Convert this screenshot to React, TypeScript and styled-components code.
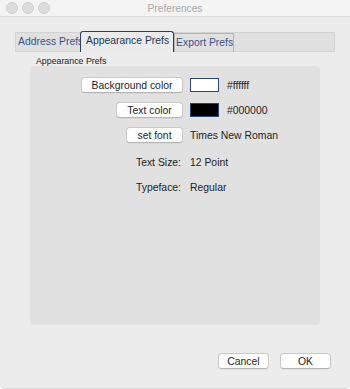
import React from 'react';
import styled, { createGlobalStyle } from 'styled-components';

const GlobalStyle = createGlobalStyle`
  html, body {
    margin: 0;
    padding: 0;
    background: #ffffff;
  }
  body {
    font-family: 'Liberation Sans', Arial, sans-serif;
    -webkit-font-smoothing: antialiased;
  }
`;

const Window = styled.div`
  width: 350px;
  height: 389px;
  box-sizing: border-box;
  display: flex;
  flex-direction: column;
  background: #ececec;
  border-radius: 0 0 5px 5px;
  border-bottom: 1px solid #d6d6d6;
  overflow: hidden;
`;

const TitleBar = styled.div`
  height: 16px;
  flex: none;
  display: grid;
  grid-template-columns: 1fr auto 1fr;
  align-items: center;
  padding: 0 6px;
  background: #f4f4f4;
  border-bottom: 1px solid #d9d9d9;
`;

const Lights = styled.div`
  display: flex;
  gap: 4px;
`;

const Light = styled.span`
  width: 10px;
  height: 10px;
  border-radius: 50%;
  background: #dcdcdc;
  border: 0.5px solid #d0d0d0;
`;

const Title = styled.div`
  font-size: 10.2px;
  color: #a8a8a8;
`;

const TabStrip = styled.div`
  margin: 15px 15px 0;
  height: 20px;
  display: flex;
  align-items: stretch;
  background: #e0e0e0;
  border: 1px solid #d3d3d3;
  box-sizing: border-box;
`;

const Tab = styled.div<{ $active?: boolean; $width: number }>`
  width: ${p => p.$width}px;
  flex: none;
  box-sizing: border-box;
  overflow: hidden;
  white-space: nowrap;
  font-size: 10.4px;
  line-height: 18px;
  padding-left: ${p => (p.$active ? 5 : 2)}px;
  color: ${p => (p.$active ? '#1f3457' : '#3a5384')};
  background: ${p => (p.$active ? '#ebebeb' : 'transparent')};
  border: ${p => (p.$active ? '1.5px solid #25406b' : 'none')};
  border-bottom: none;
  border-radius: ${p => (p.$active ? '3px 3px 0 0' : '0')};
  margin-top: ${p => (p.$active ? '-2px' : '0')};
  margin-bottom: -1px;
`;

const OutlinedTab = styled(Tab)`
  border: 1px solid #b4b4b4;
  border-bottom: none;
  margin-top: 0;
  padding-left: 1px;
`;

const GroupLabel = styled.div`
  margin: 4px 0 0 36px;
  font-size: 8.8px;
  line-height: 10px;
  color: #1a1a1a;
`;

const Panel = styled.div`
  margin: 0 30px;
  height: 259px;
  box-sizing: border-box;
  background: #e1e1e1;
  border-radius: 4px;
  padding-top: 11px;
  display: grid;
  grid-template-columns: 153px 1fr;
  grid-auto-rows: 25px;
  column-gap: 7px;
  align-content: start;
`;

const Cell = styled.div<{ $right?: boolean }>`
  display: flex;
  align-items: center;
  justify-content: ${p => (p.$right ? 'flex-end' : 'flex-start')};
  gap: 8px;
  font-size: 10.4px;
  color: #1e1e1e;
  height: 16px;
`;

const LabelCell = styled(Cell)`
  height: 20px;
  padding-right: 2px;
`;

const PushButton = styled.button<{ $width: number }>`
  width: ${p => p.$width}px;
  height: 16px;
  padding: 0;
  box-sizing: border-box;
  font-family: inherit;
  font-size: 10.4px;
  color: #1e1e1e;
  background: #ffffff;
  border: 1px solid #c9c9c9;
  border-bottom-color: #b5b5b5;
  border-radius: 4px;
  box-shadow: 0 0.5px 0.5px rgba(0, 0, 0, 0.08);
`;

const Swatch = styled.span<{ $color: string }>`
  width: 29px;
  height: 14px;
  box-sizing: border-box;
  background: ${p => p.$color};
  border: 1.5px solid #2a4677;
`;

const Footer = styled.div`
  margin-top: auto;
  display: flex;
  justify-content: flex-end;
  gap: 11px;
  padding: 0 19px 19px 0;
`;

const rows = [
  { button: 'Background color', width: 102, swatch: '#ffffff', value: '#ffffff' },
  { button: 'Text color', width: 67, swatch: '#000000', value: '#000000' },
  { button: 'set font', width: 57, value: 'Times New Roman' },
];

export default function App() {
  return (
    <>
      <GlobalStyle />
      <Window>
        <TitleBar>
          <Lights>
            <Light />
            <Light />
            <Light />
          </Lights>
          <Title>Preferences</Title>
          <span />
        </TitleBar>

        <TabStrip>
          <Tab $width={64}>Address Prefs</Tab>
          <Tab $active $width={94}>Appearance Prefs</Tab>
          <OutlinedTab $width={60}>Export Prefs</OutlinedTab>
        </TabStrip>

        <GroupLabel>Appearance Prefs</GroupLabel>

        <Panel>
          {rows.map(r => (
            <React.Fragment key={r.button}>
              <Cell $right>
                <PushButton $width={r.width}>{r.button}</PushButton>
              </Cell>
              <Cell>
                {r.swatch && <Swatch $color={r.swatch} />}
                {r.value}
              </Cell>
            </React.Fragment>
          ))}
          <LabelCell $right>Text Size:</LabelCell>
          <LabelCell>12 Point</LabelCell>
          <LabelCell $right>Typeface:</LabelCell>
          <LabelCell>Regular</LabelCell>
        </Panel>

        <Footer>
          <PushButton $width={51}>Cancel</PushButton>
          <PushButton $width={51}>OK</PushButton>
        </Footer>
      </Window>
    </>
  );
}
